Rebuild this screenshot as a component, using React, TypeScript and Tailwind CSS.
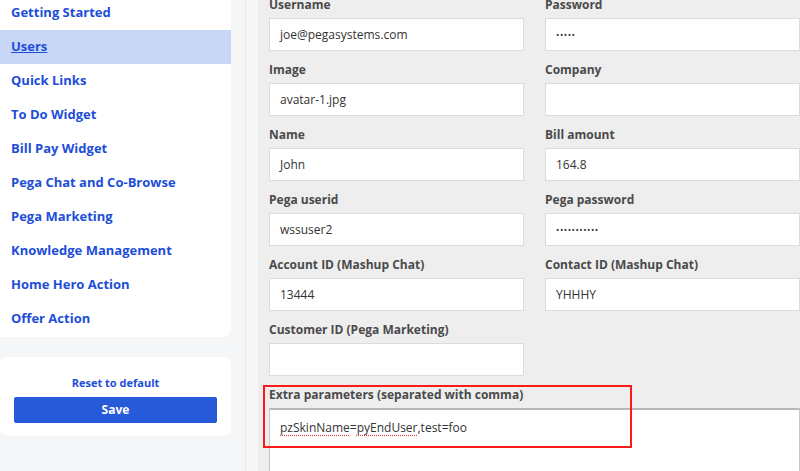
import type { ReactNode } from "react";

const navItems = [
  "Getting Started",
  "Users",
  "Quick Links",
  "To Do Widget",
  "Bill Pay Widget",
  "Pega Chat and Co-Browse",
  "Pega Marketing",
  "Knowledge Management",
  "Home Hero Action",
  "Offer Action",
];

type Field = { label: string; value: ReactNode };

const dots = (n: number) => (
  <span className="text-[9px] tracking-[0.5px]">{"•".repeat(n)}</span>
);

const fields: Field[] = [
  { label: "Username", value: "joe@pegasystems.com" },
  { label: "Password", value: dots(5) },
  { label: "Image", value: "avatar-1.jpg" },
  { label: "Company", value: "" },
  { label: "Name", value: "John" },
  { label: "Bill amount", value: "164.8" },
  { label: "Pega userid", value: "wssuser2" },
  { label: "Pega password", value: dots(11) },
  { label: "Account ID (Mashup Chat)", value: "13444" },
  { label: "Contact ID (Mashup Chat)", value: "YHHHY" },
  { label: "Customer ID (Pega Marketing)", value: "" },
];

function FormField({ label, value }: Field) {
  return (
    <div className="flex flex-col">
      <label className="mb-[4px] text-[12px] font-bold leading-[18px] text-[#4a4a4a]">
        {label}
      </label>
      <div className="flex h-[33px] items-center border border-[#dcdcdc] bg-white px-[10px] text-[12px] text-[#333]">
        {value}
      </div>
    </div>
  );
}

export default function App() {
  return (
    <div className="flex h-[471px] w-[800px] overflow-hidden bg-[#f5f6f7] font-['Open_Sans',sans-serif]">
      {/* サイドバー */}
      <aside className="flex w-[231px] shrink-0 flex-col gap-[20px]">
        <nav className="-mt-[4px] rounded-br-lg bg-white pb-[1px]">
          {navItems.map((item) => (
            <a
              key={item}
              className={
                item === "Users"
                  ? "flex h-[34px] items-center bg-[#c9d7f7] pl-[11px] text-[13px] font-bold text-[#1d4ed8] underline"
                  : "flex h-[34px] items-center pl-[11px] text-[13px] font-bold text-[#1d4ed8]"
              }
            >
              {item}
            </a>
          ))}
        </nav>
        <div className="flex flex-col items-center rounded-lg bg-white px-[14px] pb-[13px] pt-[18px]">
          <button className="mb-[6px] text-[11px] font-bold leading-[16px] text-[#1d4ed8]">
            Reset to default
          </button>
          <button className="h-[26px] w-full rounded-[2px] bg-[#275ad8] text-[12px] font-bold text-white">
            Save
          </button>
        </div>
      </aside>

      {/* フォーム */}
      <main className="ml-[14px] flex-1 border-l border-[#ebebeb] bg-[#f7f7f7] pl-[12px]">
        <div className="relative -mt-[4px] h-[490px] bg-[#eeeeee] pl-[11px]">
          <div className="grid grid-cols-[255px_255px] gap-x-[21px] gap-y-[10px]">
            {fields.map((f) => (
              <FormField key={f.label} label={f.label} value={f.value} />
            ))}
            <div className="col-span-2 flex flex-col">
              <label className="mb-[4px] text-[12px] font-bold leading-[18px] text-[#4a4a4a]">
                Extra parameters (separated with comma)
              </label>
              <div className="h-[100px] border border-[#c8c8c8] border-t-2 border-t-[#b8b8bb] bg-white px-[10px] pt-[9px] text-[12px] leading-[18px] text-[#333]">
                <span className="underline decoration-[#e04040] decoration-dotted underline-offset-[3px]">
                  pzSkinName
                </span>
                =
                <span className="underline decoration-[#e04040] decoration-dotted underline-offset-[3px]">
                  pyEndUser
                </span>
                ,test=foo
              </div>
            </div>
          </div>
          {/* 赤枠ハイライト */}
          <div className="pointer-events-none absolute left-[5px] top-[389px] h-[63px] w-[369px] border-2 border-[#ff1a1a]" />
        </div>
      </main>
    </div>
  );
}
